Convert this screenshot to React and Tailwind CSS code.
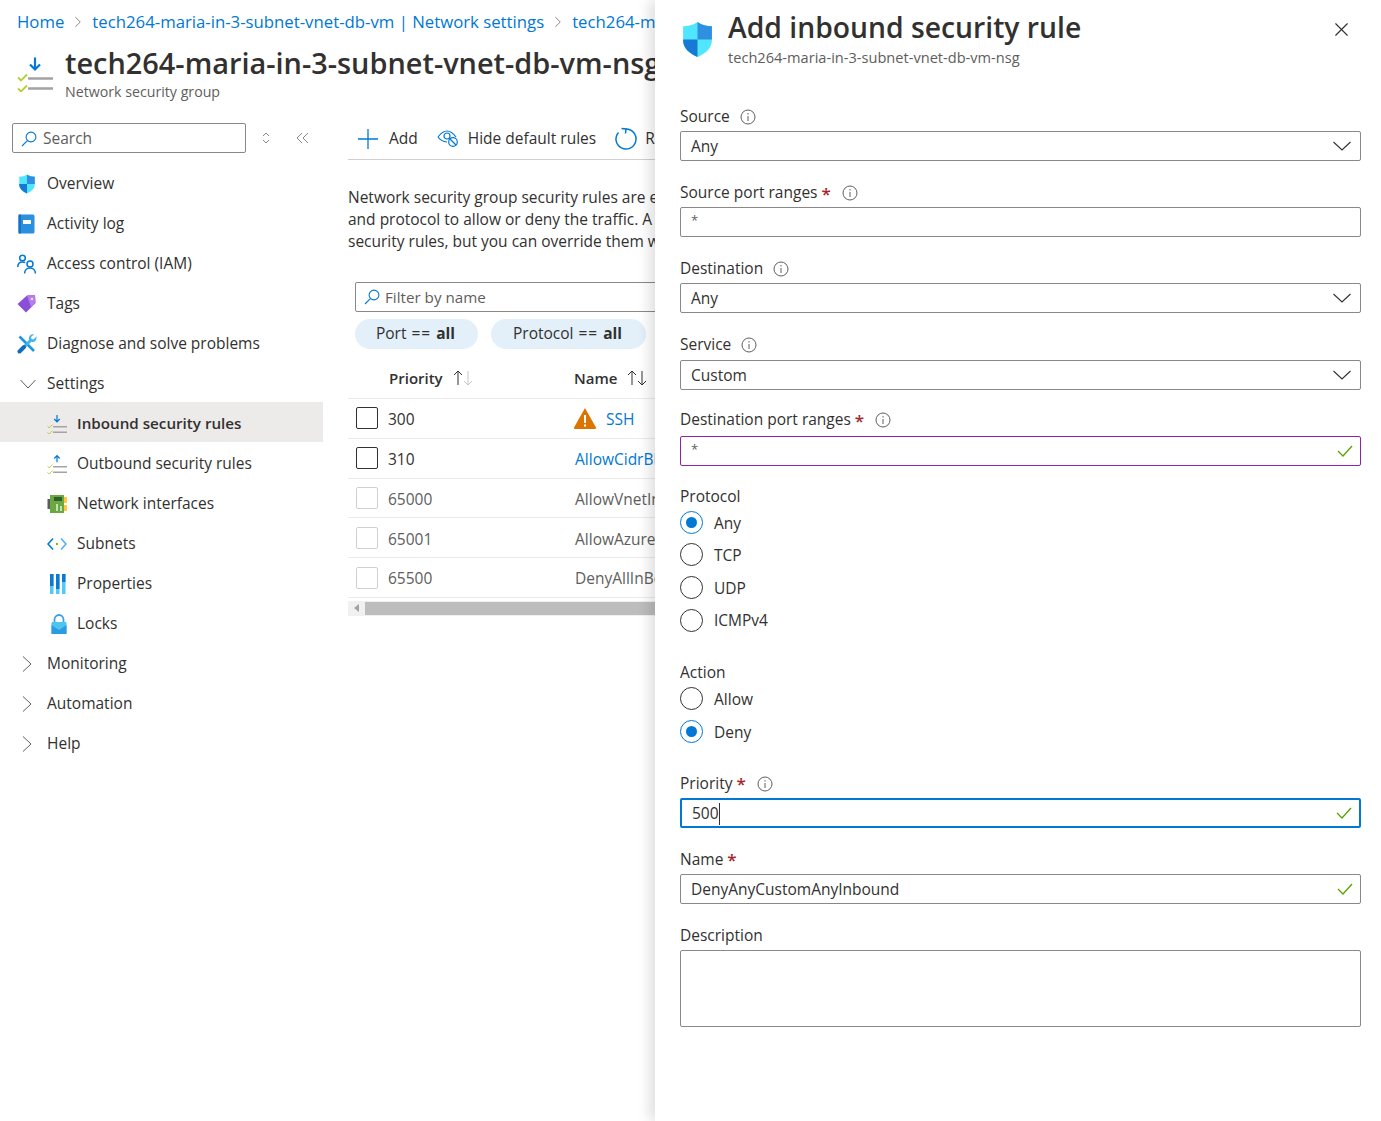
import React from "react";
import { ChevronRight, X } from "lucide-react";

const Shield = ({ className }) => (
  <svg viewBox="0 0 30 36" className={className}>
    <path d="M15 1C11 4 6 5 1 5v14c0 8 7 13 14 16 7-3 14-8 14-16V5C24 5 19 4 15 1z" fill="#50e6ff" />
    <path d="M15 1C19 4 24 5 29 5v13H15z" fill="#2f8fe0" />
    <path d="M15 18H1v1c0 8 7 13 14 16z" fill="#1679d3" />
  </svg>
);

// the list-with-arrow icon for inbound and outbound rules
const RuleIcon = ({ up, className }) => (
  <svg viewBox="0 0 36 36" className={className} fill="none">
    <path d={up ? "M18 15V3M13 8l5-5 5 5" : "M18 2v12M13 9l5 5 5-5"} stroke="#0078d4" strokeWidth="2.2" />
    <path d="M11 23h25M11 33h25" stroke="#a3a3a3" strokeWidth="2.6" />
    <path d="M1 22l3 3 6-6M1 33l3 3 6-6" stroke="#b5cf3c" strokeWidth="1.8" />
  </svg>
);

const SearchIcon = () => (
  <svg viewBox="0 0 16 16" className="h-4 w-4 shrink-0" fill="none" stroke="#0078d4" strokeWidth="1.1">
    <circle cx="10" cy="6" r="4.9" />
    <path d="M6.4 9.6L1 15" />
  </svg>
);

const Overview = () => <Shield className="h-5 w-[18px]" />;

const ActivityLog = () => (
  <svg viewBox="0 0 18 20" className="h-5 w-[18px]">
    <rect x="0.5" y="0.5" width="16" height="19" rx="1.5" fill="#2b8fe0" />
    <rect x="0.5" y="0.5" width="2.5" height="19" fill="#1b6fc2" />
    <rect x="5" y="6" width="8" height="4" fill="#fff" />
  </svg>
);

const Access = () => (
  <svg viewBox="0 0 20 20" className="h-5 w-5" fill="none" stroke="#0078d4" strokeWidth="1.5">
    <circle cx="5.5" cy="4" r="2.8" />
    <path d="M0.8 13c0-3.5 2-5 4.7-5 1 0 2 .2 2.6.7" />
    <circle cx="13" cy="10" r="3" />
    <path d="M7.6 19.5c0-3.4 2.3-5.5 5.4-5.5s5.4 2.1 5.4 5.5" />
  </svg>
);

const Tags = () => (
  <svg viewBox="0 0 20 20" className="h-5 w-5">
    <path d="M0.5 10L10 1.5l8-.5.5 8L9 18.5z" fill="#8a4fd8" />
    <path d="M10 1.5l8-.5.5 8L14 13z" fill="#b47ce8" />
    <circle cx="15" cy="5" r="1.3" fill="#e8dcf8" />
  </svg>
);

const Tools = () => (
  <svg viewBox="0 0 20 20" className="h-5 w-5" fill="none">
    <path d="M2.5 2.5L17 17" stroke="#1c9ad6" strokeWidth="2.6" />
    <path d="M5 15L14 6" stroke="#3fb4ea" strokeWidth="3" />
    <path d="M2.5 17.500L7 13" stroke="#0f6cbd" strokeWidth="4" strokeLinecap="round" />
    <path d="M19.500 2.500l-3 3-2-.5-.5-2 3-2.500c-3-.7-5.500 1.500-5 5l3 2.500c3 .5 5-2.500 4.500-5.500z" fill="#3fb4ea" />
  </svg>
);

const Nic = () => (
  <svg viewBox="0 0 20 20" className="h-5 w-5">
    <rect x="0.5" y="5" width="3" height="10" fill="#5c5c5c" />
    <rect x="3" y="1" width="14" height="18" fill="#6aa842" />
    <rect x="7" y="3" width="8" height="4" fill="#2f5f2a" />
    <rect x="9" y="10" width="2" height="7" fill="#c6deb0" />
    <rect x="13" y="12" width="2" height="5" fill="#c6deb0" />
    <rect x="17" y="3" width="3" height="6" fill="#ffc83d" />
    <rect x="17" y="11" width="3" height="6" fill="#ffc83d" />
  </svg>
);

const Subnets = () => (
  <svg viewBox="0 0 20 20" className="h-5 w-5" fill="none" strokeWidth="1.6">
    <path d="M6 4.5L1 10l5 5.500" stroke="#0078d4" />
    <path d="M14 4.5l5 5.500-5 5.500" stroke="#50b0f0" />
    <circle cx="10" cy="10" r="1.2" fill="#7fba00" />
  </svg>
);

const Properties = () => (
  <svg viewBox="0 0 18 20" className="h-5 w-[18px]">
    <rect x="1" y="0" width="3.5" height="20" fill="#50c8f8" />
    <rect x="7" y="0" width="3.5" height="20" fill="#50c8f8" />
    <rect x="13" y="0" width="3.5" height="20" fill="#50c8f8" />
    <rect x="1" y="0" width="3.5" height="12" fill="#0f78d4" />
    <rect x="7" y="0" width="3.5" height="15" fill="#0f78d4" />
    <rect x="13" y="0" width="3.5" height="8" fill="#0f78d4" />
  </svg>
);

const Lock = () => (
  <svg viewBox="0 0 16 20" className="h-5 w-4">
    <path d="M3.5 9V5.500a4.500 4.500 0 0 1 9 0V9" fill="none" stroke="#3aa0e8" strokeWidth="1.8" />
    <rect x="0.5" y="8" width="15" height="12" rx="1" fill="#50c4f0" />
    <path d="M0.5 11L8 16l7.500-5v9h-15z" fill="#2b9ce0" />
  </svg>
);

const Caret = ({ open }) =>
  open ? (
    <svg viewBox="0 0 16 10" className="h-2.5 w-4" fill="none" stroke="#605e5c">
      <path d="M0.5 1L8 9l7.500-8" />
    </svg>
  ) : (
    <svg viewBox="0 0 10 16" className="h-4 w-2.5" fill="none" stroke="#605e5c">
      <path d="M1 0.5L9 8l-8 7.500" />
    </svg>
  );

const topItems = [
  { name: "Overview", icon: Overview },
  { name: "Activity log", icon: ActivityLog },
  { name: "Access control (IAM)", icon: Access },
  { name: "Tags", icon: Tags },
  { name: "Diagnose and solve problems", icon: Tools },
];

const subItems = [
  { name: "Inbound security rules", icon: () => <RuleIcon className="h-5 w-5" />, active: true },
  { name: "Outbound security rules", icon: () => <RuleIcon up className="h-5 w-5" /> },
  { name: "Network interfaces", icon: Nic },
  { name: "Subnets", icon: Subnets },
  { name: "Properties", icon: Properties },
  { name: "Locks", icon: Lock },
];

const rows = [
  { priority: "300", name: "SSH", link: true, warn: true, on: true },
  { priority: "310", name: "AllowCidrBlockCustom", link: true, on: true },
  { priority: "65000", name: "AllowVnetInBound" },
  { priority: "65001", name: "AllowAzureLoadBalancerInBound" },
  { priority: "65500", name: "DenyAllInBound" },
];

const Sidebar = () => (
  <div className="w-[323px] shrink-0">
    <div className="flex h-[30px] items-center pl-3">
      <div className="flex h-[30px] w-[234px] items-center gap-[6px] rounded-[2px] border border-[#8a8886] pl-2 pt-[2px]">
        <SearchIcon />
        <span className="text-[#605e5c]">Search</span>
      </div>
      <svg viewBox="0 0 10 14" className="ml-[15px] h-3.5 w-2.5" fill="none" stroke="#8a8886">
        <path d="M2 5l3-3 3 3M2 9l3 3 3-3" />
      </svg>
      <svg viewBox="0 0 14 12" className="ml-[25px] h-3 w-3.5" fill="none" stroke="#8a8886">
        <path d="M6 1L1 6l5 5M12 1L7 6l5 5" />
      </svg>
    </div>
    <div className="mt-[9px] flex flex-col">
      {topItems.map((item) => (
        <div key={item.name} className="flex h-10 items-center pt-[4px]">
          <span className="flex w-[47px] justify-center pl-[13px] pr-[7px]">
            <item.icon />
          </span>
          {item.name}
        </div>
      ))}
      <div className="flex h-10 items-center pt-[4px]">
        <span className="flex w-[47px] justify-center pl-[15px] pr-[7px]">
          <Caret open />
        </span>
        Settings
      </div>
      {subItems.map((item) => (
        <div
          key={item.name}
          className={`flex h-10 items-center ${item.active ? "bg-[#edebe9] pt-[3px] text-[15.2px] font-semibold" : "pt-[4px]"}`}
        >
          <span className="flex w-[77px] justify-end pr-[10px]">
            <item.icon />
          </span>
          {item.name}
        </div>
      ))}
      {["Monitoring", "Automation", "Help"].map((name) => (
        <div key={name} className="flex h-10 items-center pt-[4px]">
          <span className="flex w-[47px] justify-center pl-[13px] pr-[7px]">
            <Caret />
          </span>
          {name}
        </div>
      ))}
    </div>
  </div>
);

const Checkbox = ({ on }) => (
  <span className={`h-[22px] w-[22px] shrink-0 rounded-[2px] border ${on ? "border-[#323130]" : "border-[#d2d0ce]"}`} />
);

const SortArrows = ({ both }) => (
  <svg viewBox="0 0 22 16" className="ml-[9px] h-4 w-[22px]" fill="none" strokeWidth="1">
    <path d="M6 15V1M2 5l4-4 4 4" stroke="#323130" />
    <path d="M16 1v14M12 11l4 4 4-4" stroke={both ? "#323130" : "#c8c6c4"} />
  </svg>
);

const Rules = () => (
  <div className="min-w-0 flex-1 overflow-hidden pl-[25px]">
    <div className="-mt-[5px] flex h-[42px] items-center whitespace-nowrap border-b border-[#d2d0ce]">
      <svg viewBox="0 0 20 20" className="ml-[10px] h-5 w-5 shrink-0" fill="none" stroke="#0078d4" strokeWidth="1.3">
        <path d="M10 0v20M0 10h20" />
      </svg>
      <span className="ml-[11px]">Add</span>
      <svg viewBox="0 0 22 18" className="ml-[19px] h-[18px] w-[22px] shrink-0" fill="none" stroke="#0078d4" strokeWidth="1.2">
        <path d="M1 7c3-4 6-6 9-6s6 2 9 6" />
        <path d="M1 7c2 3 5 4.500 9 5" />
        <circle cx="10" cy="6" r="3" />
        <circle cx="16" cy="12" r="4.3" />
        <path d="M13 9l6 6" />
      </svg>
      <span className="ml-[9px]">Hide default rules</span>
      <svg viewBox="0 0 24 24" className="ml-[18px] h-6 w-6 shrink-0" fill="none" stroke="#0078d4" strokeWidth="1.5">
        <path d="M12 2A10 10 0 1 1 4.500 5.400" />
        <path d="M7.500 1.500L12 2l-.5 4.500" />
      </svg>
      <span className="ml-[7px]">Refresh</span>
    </div>
    <p className="mt-[26px] whitespace-nowrap leading-[22px]">
      Network security group security rules are evaluated by priority using the 5-tuple information
      <br />
      and protocol to allow or deny the traffic. A security rule can be created per direction
      <br />
      security rules, but you can override them with rules of higher priority
    </p>
    <div className="ml-[7px] mt-[30px] flex h-[30px] w-[500px] items-center gap-[5px] rounded-[2px] border border-[#8a8886] pl-2">
      <SearchIcon />
      <span className="text-[15.2px] text-[#605e5c]">Filter by name</span>
    </div>
    <div className="ml-[7px] mt-[7px] flex gap-[13px] whitespace-nowrap">
      <span className="flex h-[30px] w-[123px] items-center justify-center rounded-full bg-[#e3f0fa] pr-[2px]">
        Port
        <span className="ml-[5px] tracking-[1px]">==</span>
        <b className="ml-[5px] font-bold">all</b>
      </span>
      <span className="flex h-[30px] w-[155px] items-center justify-center rounded-full bg-[#e3f0fa] pr-[2px]">
        Protocol
        <span className="ml-[5px] tracking-[1px]">==</span>
        <b className="ml-[5px] font-bold">all</b>
      </span>
    </div>
    <div className="mt-[9px] w-[600px]">
      <div className="flex h-[41px] items-center border-b border-[#edebe9] text-[15px] font-semibold">
        <div className="flex w-[226px] items-center pl-[41px]">
          Priority
          <SortArrows />
        </div>
        <div className="flex items-center">
          Name
          <SortArrows both />
        </div>
      </div>
      {rows.map((row) => (
        <div key={row.priority} className="flex h-[39.8px] items-center whitespace-nowrap border-b border-[#edebe9]">
          <div className={`flex w-[227px] items-center gap-[10px] pl-2 ${row.on ? "" : "text-[#605e5c]"}`}>
            <Checkbox on={row.on} />
            <span className="pt-[3px]">{row.priority}</span>
          </div>
          {row.warn && (
            <svg viewBox="0 0 24 22" className="mr-[9px] -ml-[2px] h-[22px] w-6">
              <path d="M12 1L1 20.5c-.3.7 0 1.5 1 1.5h20c1 0 1.300-.8 1-1.500z" fill="#db7500" />
              <path d="M11 8h2v8h-2zM11 17.500h2v2h-2z" fill="#fff" />
            </svg>
          )}
          <span className={`pt-[3px] ${row.link ? "text-[#0078d4]" : "text-[#605e5c]"}`}>{row.name}</span>
        </div>
      ))}
      <div className="mt-[3px] flex h-[15px] items-center bg-[#f1f1f1]">
        <svg viewBox="0 0 6 8" className="ml-[6px] h-2 w-1.5">
          <path d="M5 0v8L0 4z" fill="#a3a3a3" />
        </svg>
        <div className="ml-[5px] h-[13px] flex-1 bg-[#bdbdbd]" />
      </div>
    </div>
  </div>
);

const Info = () => (
  <svg viewBox="0 0 16 16" className="h-4 w-4 shrink-0" fill="none" stroke="#605e5c">
    <circle cx="8" cy="8" r="7" />
    <path d="M8 7v5M8 4v1.500" />
  </svg>
);

const Label = ({ text, required, info, className = "" }) => (
  <div className={`flex h-6 items-center ${className}`}>
    {text}
    {required && <span className="ml-[4px] text-[17px] font-semibold leading-none text-[#a4262c]">*</span>}
    {info && (
      <span className={required ? "ml-[11px]" : "ml-[10px]"}>
        <Info />
      </span>
    )}
  </div>
);

const Green = () => (
  <svg viewBox="0 0 16 14" className="absolute right-[7px] top-1/2 h-3.5 w-4 -translate-y-1/2" fill="none" stroke="#57a300" strokeWidth="1.3">
    <path d="M1 7l5 5L15 2" />
  </svg>
);

const Field = ({ value, select, ok, tone = "border border-[#8a8886]", caret, className = "mt-0.5" }) => (
  <div className={`relative flex h-[30px] items-center rounded-[2px] pl-[10px] pt-[2px] ${tone} ${className}`}>
    {value === "*" ? <span className="-mt-1 text-[13px] text-[#605e5c]">*</span> : value}
    {caret && <span className="h-[22px] w-px bg-[#323130]" />}
    {select && (
      <svg viewBox="0 0 18 10" className="absolute right-[9px] top-1/2 h-2.5 w-[18px] -translate-y-1/2" fill="none" stroke="#323130" strokeWidth="1.1">
        <path d="M0.5 1L9 9l8.500-8" />
      </svg>
    )}
    {ok && <Green />}
  </div>
);

const Radio = ({ text, on }) => (
  <div className="flex h-[32.6px] items-center gap-[11px]">
    <span className={`flex h-[23px] w-[23px] items-center justify-center rounded-full border ${on ? "border-[#0078d4]" : "border-[#323130]"}`}>
      {on && <span className="h-[11px] w-[11px] rounded-full bg-[#0078d4]" />}
    </span>
    <span className="pt-[2px]">{text}</span>
  </div>
);

const Panel = () => (
  <div className="absolute bottom-0 right-0 top-0 w-[726px] bg-white pl-[25px] pr-5 shadow-[-6px_0_12px_rgba(0,0,0,0.12)]">
    <X className="absolute right-[28px] top-[18px] h-[23px] w-[23px] text-[#323130]" strokeWidth={1.2} />
    <div className="flex h-[105px] items-start">
      <Shield className="ml-[2px] mt-[21px] h-[37px] w-[31px] shrink-0" />
      <div className="ml-[15px]">
        <div className="mt-[5px] text-[28.3px] font-semibold leading-[44px]">Add inbound security rule</div>
        <div className="-mt-[2px] text-[14.6px] leading-5 text-[#605e5c]">tech264-maria-in-3-subnet-vnet-db-vm-nsg</div>
      </div>
    </div>
    <Label text="Source" info />
    <Field value="Any" select />
    <Label text="Source port ranges" required info className="mt-5" />
    <Field value="*" />
    <Label text="Destination" info className="mt-5" />
    <Field value="Any" select />
    <Label text="Service" info className="mt-5" />
    <Field value="Custom" select className="mt-[3px]" />
    <Label text="Destination port ranges" required info className="mt-[18px]" />
    <Field value="*" ok tone="border border-[#8f22a8]" className="mt-1" />
    <Label text="Protocol" className="mt-[19px]" />
    <div className="-mt-[3px]">
      <Radio text="Any" on />
      <Radio text="TCP" />
      <Radio text="UDP" />
      <Radio text="ICMPv4" />
    </div>
    <Label text="Action" className="mt-[24px]" />
    <div className="-mt-[2px]">
      <Radio text="Allow" />
      <Radio text="Deny" on />
    </div>
    <Label text="Priority" required info className="mt-[24px]" />
    <Field value="500" ok caret tone="border-2 border-[#0078d4]" />
    <Label text="Name" required className="mt-5" />
    <Field value="DenyAnyCustomAnyInbound" ok />
    <Label text="Description" className="mt-5" />
    <div className="mt-0.5 h-[77px] rounded-[2px] border border-[#8a8886]" />
  </div>
);

export default function App() {
  return (
    <div className="relative h-[1121px] w-[1381px] overflow-hidden bg-white font-['Open_Sans',sans-serif] text-[15.5px] text-[#323130]">
      <div className="h-full w-[655px] overflow-hidden">
        <div className="flex h-11 items-center whitespace-nowrap pl-[17px] text-[16.75px] text-[#0078d4]">
          <span>Home</span>
          <ChevronRight className="mx-[5px] h-[18px] w-[18px] shrink-0 text-[#605e5c]" strokeWidth={1} />
          <span>tech264-maria-in-3-subnet-vnet-db-vm | Network settings</span>
          <ChevronRight className="mx-[5px] h-[18px] w-[18px] shrink-0 text-[#605e5c]" strokeWidth={1} />
          <span>tech264-maria-in-3-subnet-vnet-db-vm-nsg</span>
        </div>
        <div className="flex h-[79px] items-start whitespace-nowrap">
          <RuleIcon className="ml-[17px] mt-[11px] h-[37px] w-[36px] shrink-0" />
          <div className="ml-3">
            <div className="text-[28.9px] font-semibold leading-[38px]">tech264-maria-in-3-subnet-vnet-db-vm-nsg</div>
            <div className="text-[14.2px] leading-5 text-[#605e5c]">Network security group</div>
          </div>
        </div>
        <div className="flex">
          <Sidebar />
          <Rules />
        </div>
      </div>
      <Panel />
    </div>
  );
}
